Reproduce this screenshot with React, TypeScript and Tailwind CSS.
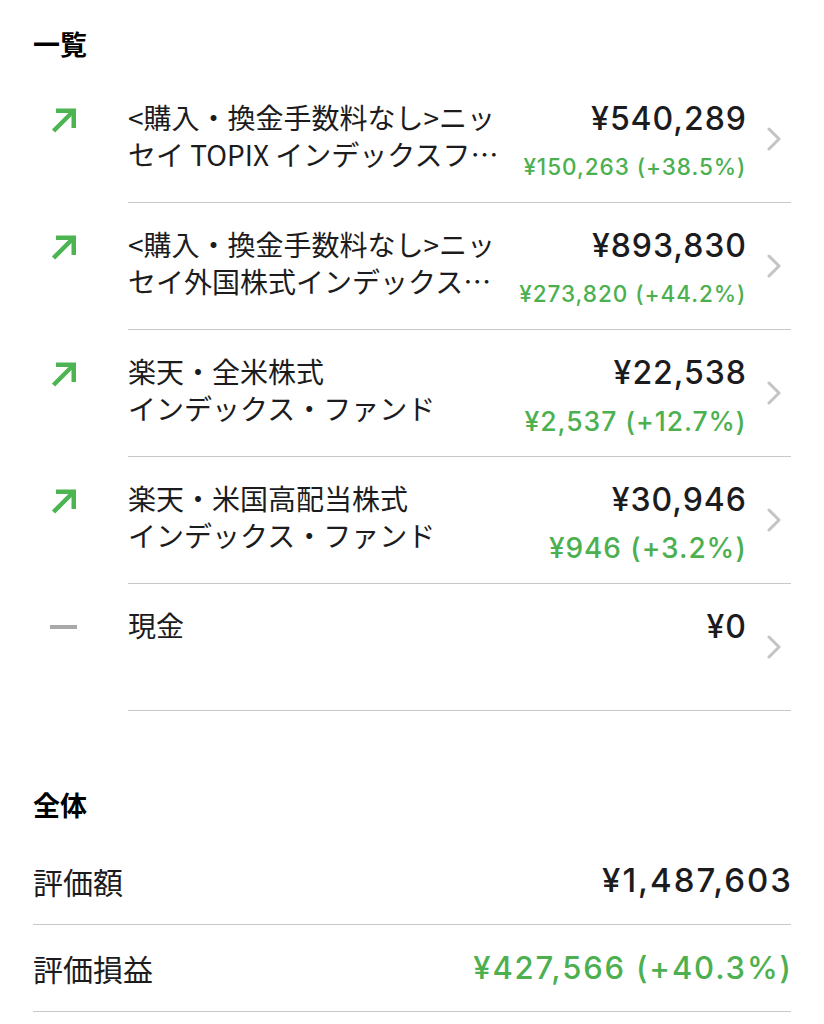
import React from "react";

type Fund = {
  lines: string[];
  price: string;
  gain?: string;
  gainSize?: string;
  up: boolean;
};

const funds: Fund[] = [
  {
    lines: ["<購入・換金手数料なし>ニッ", "セイ TOPIX インデックスフ…"],
    price: "¥540,289",
    gain: "¥150,263 (+38.5%)",
    gainSize: "text-[22.5px]",
    up: true,
  },
  {
    lines: ["<購入・換金手数料なし>ニッ", "セイ外国株式インデックス…"],
    price: "¥893,830",
    gain: "¥273,820 (+44.2%)",
    gainSize: "text-[22.5px]",
    up: true,
  },
  {
    lines: ["楽天・全米株式", "インデックス・ファンド"],
    price: "¥22,538",
    gain: "¥2,537 (+12.7%)",
    gainSize: "text-[26.5px]",
    up: true,
  },
  {
    lines: ["楽天・米国高配当株式", "インデックス・ファンド"],
    price: "¥30,946",
    gain: "¥946 (+3.2%)",
    gainSize: "text-[28px]",
    up: true,
  },
  {
    lines: ["現金"],
    price: "¥0",
    up: false,
  },
];

const jp = "font-['Noto_Sans_CJK_JP',sans-serif]";
const num = "font-['Inter','Noto_Sans_CJK_JP',sans-serif] tracking-[0.06em]";

function UpArrow() {
  return (
    <svg width="26" height="26" viewBox="0 0 26 26" fill="none">
      <path d="M3.5 24 L22 5.5" stroke="#4cb552" strokeWidth="4.5" />
      <path d="M6 3.75 H23.75 V21" stroke="#4cb552" strokeWidth="4.5" />
    </svg>
  );
}

function Flat() {
  return <div className="w-[27px] h-[4px] bg-[#a9a9a9] mt-[10px]" />;
}

function Chevron() {
  return (
    <svg width="14" height="24" viewBox="0 0 14 24" fill="none">
      <path d="M2 2 L12 12 L2 22" stroke="#c4c4c7" strokeWidth="3" strokeLinecap="round" strokeLinejoin="round" />
    </svg>
  );
}

function FundRow({ f }: { f: Fund }) {
  return (
    <div className="flex h-[127px]">
      <div className="w-[95px] pl-[17px] pt-[31px] shrink-0">
        {f.up ? <UpArrow /> : <Flat />}
      </div>
      <div className="flex-1 flex border-b border-[#c8c8ca]">
        <div className={`flex-1 pt-[23px] text-[28px] leading-[37px] text-[#1c1c1e] whitespace-nowrap ${jp}`}>
          {f.lines.map((l, i) => (
            <div key={i}>{l}</div>
          ))}
        </div>
        <div className={`pt-[23px] flex flex-col items-end ${num}`}>
          <div className="text-[32px] leading-[40px] font-medium text-[#1c1c1e] -mr-[0.06em]">{f.price}</div>
          {f.gain && (
            <div className={`mt-[13px] leading-[30px] font-medium text-[#4cb050] -mr-[0.06em] ${f.gainSize}`}>{f.gain}</div>
          )}
        </div>
        <div className="w-[46px] pl-[22px] self-center shrink-0">
          <Chevron />
        </div>
      </div>
    </div>
  );
}

export default function App() {
  return (
    <div className="w-[824px] min-h-[1024px] bg-white px-[33px]">
      <div className={`pt-[30px] pb-[19px] text-[27px] leading-[27px] font-bold text-black ${jp}`}>一覧</div>
      <div>
        {funds.map((f, i) => (
          <FundRow key={i} f={f} />
        ))}
      </div>

      <div className={`mt-[80px] text-[27px] leading-[27px] font-bold text-black ${jp}`}>全体</div>
      <div className="mt-[20px]">
        <div className="flex h-[87px] items-center justify-between border-b border-[#c8c8ca]">
          <span className={`text-[30px] text-[#1c1c1e] ${jp}`}>評価額</span>
          <span className={`text-[33px] font-medium text-[#1c1c1e] -mr-[0.06em] ${num}`}>¥1,487,603</span>
        </div>
        <div className="flex h-[87px] items-center justify-between border-b border-[#c8c8ca]">
          <span className={`text-[30px] text-[#1c1c1e] ${jp}`}>評価損益</span>
          <span className={`text-[31px] font-medium text-[#4cb050] -mr-[0.06em] ${num}`}>¥427,566 (+40.3%)</span>
        </div>
      </div>
    </div>
  );
}
